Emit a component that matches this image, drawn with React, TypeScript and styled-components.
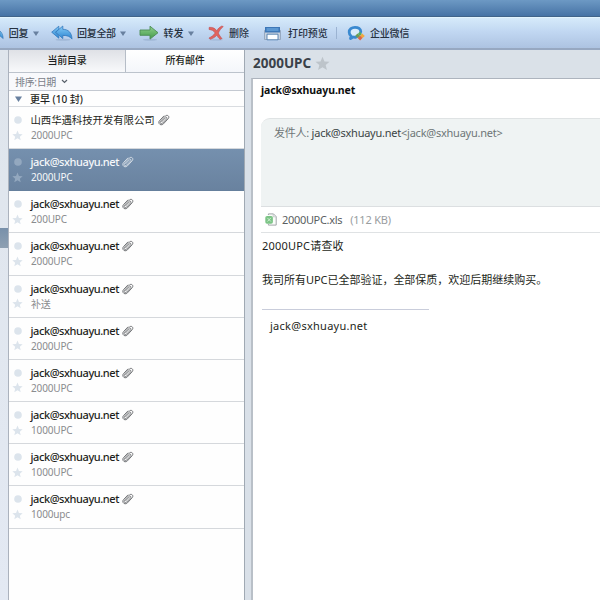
import React from "react";
import styled, { createGlobalStyle } from "styled-components";

const GlobalStyle = createGlobalStyle`
  * { box-sizing: border-box; }
  body { margin: 0; overflow: hidden; }
  svg { display: block; flex: none; }
`;

const Window = styled.div`
  width: 600px;
  height: 600px;
  display: flex;
  flex-direction: column;
  overflow: hidden;
  background: #dae1e8;
  font-family: "Noto Sans", "Noto Sans CJK SC", sans-serif;
  font-size: 11px;
  color: #1d1f20;
  white-space: nowrap;
`;

const TitleBar = styled.div`
  height: 17px;
  flex: none;
  background: linear-gradient(#6d99c4, #4673a5);
  border-bottom: 1px solid #416489;
`;

const Toolbar = styled.div`
  height: 33px;
  flex: none;
  display: flex;
  align-items: center;
  border-top: 1px solid #e2f4fd;
  border-bottom: 2px solid #97a8c1;
  background: linear-gradient(#d5eafa, #c0d6f1 48%, #adc3e1);
`;

const Tool = styled.div<{ $gap: number; $after: number; $width: number }>`
  display: flex;
  align-items: center;
  gap: ${(p) => p.$gap}px;
  width: ${(p) => p.$width}px;
  margin-right: ${(p) => p.$after}px;
  flex: none;
`;

const ToolLabel = styled.span<{ $tracking?: number }>`
  font-size: 10px;
  line-height: 16px;
  color: #26313f;
  font-weight: 500;
  letter-spacing: ${(p) => p.$tracking ?? 0}px;
`;

const Separator = styled.div`
  width: 1px;
  height: 12px;
  background: #9bb3d2;
  margin-right: 10px;
`;

const Body = styled.div`
  flex: 1;
  display: flex;
  min-height: 0;
`;

const Rail = styled.div`
  width: 8px;
  flex: none;
  padding-top: 178px;
  background: linear-gradient(#dfe5ec, #e3e9f3);
`;

const RailSelection = styled.div`
  height: 20px;
  background: linear-gradient(#7890aa, #8ea0b2);
`;

const ListPane = styled.div`
  width: 237px;
  flex: none;
  display: flex;
  flex-direction: column;
  background: #fefefe;
  border-left: 1px solid #abb2bd;
  border-right: 1px solid #a0a9b3;
`;

const Tabs = styled.div`
  display: flex;
  height: 23px;
  flex: none;
  border-bottom: 1px solid #bcc3cc;
`;

const Tab = styled.div<{ $active?: boolean }>`
  width: ${(p) => (p.$active ? 117 : 118)}px;
  line-height: 21px;
  text-align: center;
  font-size: 10px;
  font-weight: 500;
  letter-spacing: -0.3px;
  border-right: ${(p) => (p.$active ? "1px solid #b6bdc7" : "none")};
  background: ${(p) =>
    p.$active ? "linear-gradient(#dfe1e6, #f8f9fb)" : "linear-gradient(#fff, #f4f6fa)"};
`;

const SortBar = styled.div`
  display: flex;
  align-items: center;
  gap: 5px;
  height: 18px;
  flex: none;
  padding-left: 6px;
  color: #7a8088;
  font-size: 10px;
  letter-spacing: -0.35px;
  background: #f8f9fc;
  border-bottom: 1px solid #c4c9d1;
`;

const GroupBar = styled.div`
  display: flex;
  align-items: center;
  gap: 8px;
  height: 16px;
  flex: none;
  padding-left: 6px;
  font-size: 10px;
  font-weight: 500;
  letter-spacing: 0;
  border-bottom: 1px solid #d9dce0;
`;

const Row = styled.div<{ $selected?: boolean }>`
  display: grid;
  grid-template-columns: 22px 1fr;
  grid-template-rows: 14px 16px;
  align-items: center;
  height: 42.16px;
  flex: none;
  padding-top: 6px;
  border-bottom: 1px solid ${(p) => (p.$selected ? "#657f9c" : "#d5d8dc")};
  background: ${(p) => (p.$selected ? "linear-gradient(#7590ae, #69829f)" : "transparent")};
  color: ${(p) => (p.$selected ? "#f6f8fa" : "#1d1f20")};
`;

const Mark = styled.div<{ $selected?: boolean }>`
  display: flex;
  justify-content: center;
  padding-right: 5px;
  color: ${(p) => (p.$selected ? "#93a8bf" : "#dce4ec")};
`;

const Sender = styled.div`
  display: flex;
  align-items: center;
  gap: 3px;
  line-height: 14px;
`;

const Name = styled.span<{ $cjk: boolean }>`
  font-size: ${(p) => (p.$cjk ? 10.4 : 11)}px;
  font-weight: ${(p) => (p.$cjk ? 400 : 500)};
  letter-spacing: ${(p) => (p.$cjk ? -0.05 : -0.42)}px;
  margin-left: -0.5px;
`;

const Subject = styled.div<{ $selected?: boolean }>`
  font-size: 10px;
  line-height: 16px;
  letter-spacing: -0.15px;
  color: ${(p) => (p.$selected ? "#f6f8fa" : "#8a8c8e")};
`;

const Gutter = styled.div`
  width: 6px;
  flex: none;
  background: #d9e0e8;
`;

const Reader = styled.div`
  flex: 1;
  display: flex;
  flex-direction: column;
  min-width: 0;
`;

const Heading = styled.div`
  display: flex;
  align-items: center;
  gap: 4px;
  height: 28px;
  flex: none;
  padding: 0 0 2px 2px;
  color: #3a4149;
  font-size: 13.5px;
  font-weight: 700;
`;

const Letter = styled.div`
  flex: 1;
  padding-left: 8px;
  background: #fff;
  border-top: 1px solid #adb4be;
  border-left: 2px solid #b9c0c8;
`;

const LetterSender = styled.div`
  height: 39px;
  line-height: 22px;
  color: #0e0f10;
  font-size: 10.5px;
  font-weight: 700;
  letter-spacing: -0.08px;
`;

const Details = styled.div`
  height: 89px;
  padding: 6px 0 0 13px;
  line-height: 15px;
  letter-spacing: -0.24px;
  color: #6e7677;
  background: #eff3f3;
  border-top: 1px solid #dfe3e4;
  border-bottom: 1px solid #dcdfe1;
  border-top-left-radius: 9px;
`;

const DetailName = styled.span`
  color: #3b4445;
`;

const Attachment = styled.div`
  display: flex;
  align-items: center;
  height: 26px;
  padding: 0 0 1px 4px;
  color: #5b5f62;
  letter-spacing: -0.32px;
  border-bottom: 1px solid #dfe2e4;
`;

const FileName = styled.span`
  margin: 0 8px 0 5px;
`;

const FileSize = styled.span`
  color: #9a9d9f;
  letter-spacing: -0.2px;
`;

const Content = styled.div`
  padding: 4px 0 0 1px;
  line-height: 17px;
`;

const Line = styled.p<{ $after: number; $tracking?: number }>`
  margin: 0 0 ${(p) => p.$after}px;
  letter-spacing: ${(p) => p.$tracking ?? 0}px;
`;

const SignatureRule = styled.div`
  width: 167px;
  height: 1px;
  margin-bottom: 7px;
  background: #c9cddb;
`;

const Signature = styled.div`
  padding-left: 8px;
  letter-spacing: 0.27px;
`;

const STAR = "M8 0.8 10.1 5.8 15.5 6.2 11.4 9.7 12.7 15 8 12.1 3.3 15 4.6 9.7 0.5 6.2 5.9 5.8Z";

const Star = ({ size, color = "currentColor" }: { size: number; color?: string }) => (
  <svg width={size} height={size} viewBox="0 0 16 16">
    <path d={STAR} fill={color} />
  </svg>
);

const Dot = () => (
  <svg width="8" height="8" viewBox="0 0 8 8">
    <circle cx="4" cy="4" r="3.8" fill="currentColor" />
  </svg>
);

const Triangle = ({ width = 6, height = 5, color = "#68809f" }) => (
  <svg width={width} height={height} viewBox="0 0 7 6" preserveAspectRatio="none">
    <path d="M0 .5h7L3.5 6Z" fill={color} />
  </svg>
);

const Clip = ({ selected }: { selected?: boolean }) => (
  <svg width="12" height="12" viewBox="0 0 12 12" fill="none">
    <path
      d="M3.5 7.9 7.6 3.7c.9-.9 2 .2 1.1 1.1L4.7 9.1C3.2 10.6 1 8.8 2.5 7.2L7.3 2.1c2-2 4.8.4 2.9 2.6L5.4 9.9C3 12.4-.8 9.3 1.5 6.6L5.9 2"
      stroke={selected ? "#dde3e9" : "#65686b"}
      strokeWidth=".9"
      strokeLinecap="round"
    />
  </svg>
);

const BlueGradient = ({ id }: { id: string }) => (
  <defs>
    <linearGradient id={id} x1="0" y1="0" x2="0" y2="1">
      <stop offset="0" stopColor="#86cdf8" />
      <stop offset="1" stopColor="#2b83d0" />
    </linearGradient>
  </defs>
);

const ReplyTail = () => (
  <svg width="4" height="16" viewBox="0 0 4 16">
    <BlueGradient id="tail" />
    <path d="M0 6C2 7.5 3 10 3.2 13.6L0 11Z" fill="url(#tail)" stroke="#3d79b4" strokeWidth=".6" />
  </svg>
);

const ReplyAllIcon = () => (
  <svg width="22" height="16" viewBox="0 0 22 16">
    <BlueGradient id="replyAll" />
    <ellipse cx="12" cy="14.8" rx="7.5" ry="1" fill="#90a8c8" opacity=".55" />
    <g fill="url(#replyAll)" stroke="#3478bc" strokeWidth=".8" strokeLinejoin="round">
      <path d="M7.8 1.2.7 7.2l7.1 6v-2.7L4.5 7.2l3.3-3Z" />
      <path d="M11.8 1v3.3c5.5.1 8.9 3.1 9.2 9.8-2.1-2.8-4.8-3.7-9.2-3.7v3.2L4.7 7.2Z" />
    </g>
  </svg>
);

const ForwardIcon = () => (
  <svg width="20" height="16" viewBox="0 0 20 16">
    <defs>
      <linearGradient id="forward" x1="0" y1="0" x2="0" y2="1">
        <stop offset="0" stopColor="#8fd18c" />
        <stop offset="1" stopColor="#43994a" />
      </linearGradient>
    </defs>
    <ellipse cx="11" cy="14.8" rx="7" ry="1" fill="#90a8c8" opacity=".55" />
    <path
      d="M1 5h10V1.2l8 6.5-8 6.4v-3.8H1Z"
      fill="url(#forward)"
      stroke="#4c8c55"
      strokeWidth=".9"
      strokeLinejoin="round"
    />
  </svg>
);

const DeleteIcon = () => (
  <svg width="17" height="16" viewBox="0 0 17 16">
    <ellipse cx="8" cy="14.9" rx="7" ry=".8" fill="#90a8c8" opacity=".4" />
    <path
      d="M1.2 2.3C5 2.2 7.2 3.2 8.8 5.9 9.8 3.7 11.6 2 13.8 1l1.5.6c-2.3 1.9-3.9 3.9-4.9 6.5.9 1.9 1.9 3.8 3.7 5.4l-2 .9c-1.6-1.3-2.5-2.7-3.2-4.3-1.6 2-3.8 3.4-6.7 4.2L.9 13c2.9-1.4 4.7-2.8 6.2-5C5.7 5.8 4 4.9 1 4.5Z"
      fill="#e0645e"
      stroke="#b84548"
      strokeWidth=".5"
    />
  </svg>
);

const PrinterIcon = () => (
  <svg width="17" height="15" viewBox="0 0 17 15">
    <path d="M.5 4.5h16v9H.5Z" fill="#c6d0dd" stroke="#8b9eb7" strokeWidth=".8" />
    <path d="M1 1h15v5.5H1Z" fill="#3d77b7" />
    <path d="M2.5 2h12v3h-12Z" fill="#5c98d2" />
    <path d="M3 8.2h11v5.6H3Z" fill="#fbfdff" stroke="#4c7aad" strokeWidth=".9" />
  </svg>
);

const WeComIcon = () => (
  <svg width="18" height="16" viewBox="0 0 18 16">
    <path
      d="M13.8 6.8C13.8 3.9 11.2 2.3 8 2.3 4.7 2.3 2.2 4.3 2.2 7.2c0 1.6.8 2.9 1.9 3.8l-.6 2.6L6.2 12c1 .3 2.1.3 3 .1"
      fill="#d8ebfa"
      stroke="#3a89d0"
      strokeWidth="2.8"
      strokeLinecap="round"
      strokeLinejoin="round"
    />
    <path d="m12.8 6.5 2.2 2.4-2.1 2-2-2Z" fill="#55ad61" />
    <path d="m15.2 8.5 2.6 2.5-2.5 2.2-2.2-2.2Z" fill="#f3a83c" />
    <path d="m13 10.6 2.4 2.5-2.3 2.3-2.5-2.5Z" fill="#de6544" />
    <path d="m10.5 8.5 2.4 2.4-2.3 2.2-2.3-2.3Z" fill="#6d9b55" />
  </svg>
);

const SortChevron = () => (
  <svg width="7" height="5" viewBox="0 0 7 5" fill="none">
    <path d="m1 1 2.5 2.5L6 1" stroke="#59616b" strokeWidth="1.2" />
  </svg>
);

const SheetIcon = () => (
  <svg width="12" height="13" viewBox="0 0 12 13" fill="none">
    <path d="M3.4 2V.9h5.1L11.2 3.6v8.5H3.4V11" stroke="#a1a6a8" fill="#fafcfa" />
    <path d="M8.2 1v2.8h2.7" stroke="#b5bbbb" strokeWidth=".7" />
    <rect x=".3" y="2.9" width="7.6" height="7.8" rx="1.8" fill="#7cc486" />
    <path d="m2.4 4.9 3.5 3.6m0-3.6L2.4 8.5" stroke="#d6f0d8" strokeWidth=".9" />
  </svg>
);

const ADDRESS = "jack@sxhuayu.net";

const messages = [
  { from: "山西华遇科技开发有限公司", subject: "2000UPC", cjk: true },
  { from: ADDRESS, subject: "2000UPC", selected: true },
  { from: ADDRESS, subject: "200UPC" },
  { from: ADDRESS, subject: "2000UPC" },
  { from: ADDRESS, subject: "补送" },
  { from: ADDRESS, subject: "2000UPC" },
  { from: ADDRESS, subject: "2000UPC" },
  { from: ADDRESS, subject: "1000UPC" },
  { from: ADDRESS, subject: "1000UPC" },
  { from: ADDRESS, subject: "1000upc" },
];

export default function App() {
  return (
    <Window>
      <GlobalStyle />
      <TitleBar />
      <Toolbar>
        <Tool $gap={4.8} $width={39} $after={12}>
          <ReplyTail />
          <ToolLabel $tracking={-0.3}>回复</ToolLabel>
          <Triangle />
        </Tool>
        <Tool $gap={4} $width={76} $after={12}>
          <ReplyAllIcon />
          <ToolLabel $tracking={-0.3}>回复全部</ToolLabel>
          <Triangle />
        </Tool>
        <Tool $gap={4.5} $width={57} $after={12}>
          <ForwardIcon />
          <ToolLabel>转发</ToolLabel>
          <Triangle />
        </Tool>
        <Tool $gap={4} $width={42} $after={14}>
          <DeleteIcon />
          <ToolLabel>删除</ToolLabel>
        </Tool>
        <Tool $gap={7} $width={64} $after={8}>
          <PrinterIcon />
          <ToolLabel $tracking={-0.1}>打印预览</ToolLabel>
        </Tool>
        <Separator />
        <Tool $gap={5} $width={64} $after={0}>
          <WeComIcon />
          <ToolLabel $tracking={-0.2}>企业微信</ToolLabel>
        </Tool>
      </Toolbar>
      <Body>
        <Rail>
          <RailSelection />
        </Rail>
        <ListPane>
          <Tabs>
            <Tab $active>当前目录</Tab>
            <Tab>所有邮件</Tab>
          </Tabs>
          <SortBar>
            <span>排序:日期</span>
            <SortChevron />
          </SortBar>
          <GroupBar>
            <Triangle width={7} height={6} />
            <span>更早 (10 封)</span>
          </GroupBar>
          {messages.map((m, i) => (
            <Row key={i} $selected={m.selected}>
              <Mark $selected={m.selected}>
                <Dot />
              </Mark>
              <Sender>
                <Name $cjk={!!m.cjk}>{m.from}</Name>
                <Clip selected={m.selected} />
              </Sender>
              <Mark $selected={m.selected}>
                <Star size={11} />
              </Mark>
              <Subject $selected={m.selected}>{m.subject}</Subject>
            </Row>
          ))}
        </ListPane>
        <Gutter />
        <Reader>
          <Heading>
            <span>2000UPC</span>
            <Star size={15} color="#bdc4ca" />
          </Heading>
          <Letter>
            <LetterSender>{ADDRESS}</LetterSender>
            <Details>
              发件人: <DetailName>{ADDRESS}</DetailName>&lt;{ADDRESS}&gt;
            </Details>
            <Attachment>
              <SheetIcon />
              <FileName>2000UPC.xls</FileName>
              <FileSize>(112 KB)</FileSize>
            </Attachment>
            <Content>
              <Line $after={17} $tracking={0.2}>2000UPC请查收</Line>
              <Line $after={21} $tracking={-0.02}>
                我司所有UPC已全部验证，全部保质，欢迎后期继续购买。
              </Line>
              <SignatureRule />
              <Signature>{ADDRESS}</Signature>
            </Content>
          </Letter>
        </Reader>
      </Body>
    </Window>
  );
}
